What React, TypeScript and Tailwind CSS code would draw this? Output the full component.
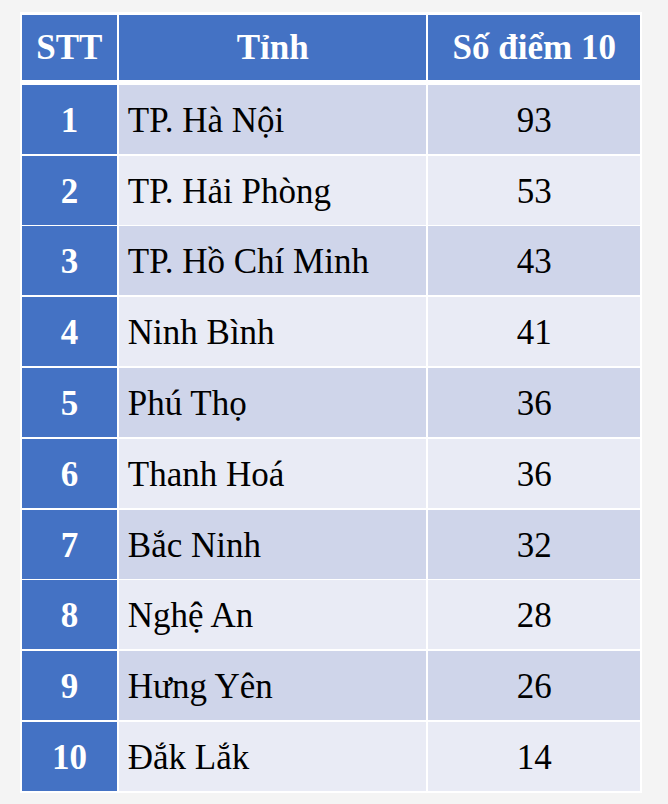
import React from 'react';

type Row = {
  stt: number;
  province: string;
  score: number;
};

const rows: Row[] = [
  { stt: 1, province: 'TP. Hà Nội', score: 93 },
  { stt: 2, province: 'TP. Hải Phòng', score: 53 },
  { stt: 3, province: 'TP. Hồ Chí Minh', score: 43 },
  { stt: 4, province: 'Ninh Bình', score: 41 },
  { stt: 5, province: 'Phú Thọ', score: 36 },
  { stt: 6, province: 'Thanh Hoá', score: 36 },
  { stt: 7, province: 'Bắc Ninh', score: 32 },
  { stt: 8, province: 'Nghệ An', score: 28 },
  { stt: 9, province: 'Hưng Yên', score: 26 },
  { stt: 10, province: 'Đắk Lắk', score: 14 },
];

export default function App() {
  return (
    <div className="min-h-screen bg-[#f4f4f4] pl-[20px] pt-[11.5px] font-[family-name:'Liberation_Serif','Times_New_Roman',serif] text-[35px] leading-none">
      <div className="flex w-[622px] flex-col gap-[1.8px] bg-white p-[1.6px]">
        <div className="mb-[3px] grid h-[67px] grid-cols-[95.6px_307.7px_212.4px] gap-[1.6px] pt-[2px] font-bold text-white">
          <div className="flex items-center justify-center bg-[#4472c4]">STT</div>
          <div className="flex items-center justify-center bg-[#4472c4]">Tỉnh</div>
          <div className="flex items-center justify-center bg-[#4472c4]">Số điểm 10</div>
        </div>
        {rows.map((row, index) => (
          <div
            key={row.stt}
            className="grid h-[69px] grid-cols-[95.6px_307.7px_212.4px] gap-[1.6px]"
          >
            <div className="flex items-center justify-center bg-[#4472c4] pt-[2px] font-bold text-white">
              {row.stt}
            </div>
            <div
              className={`flex items-center pl-[9px] pt-[2px] text-black ${
                index % 2 === 0 ? 'bg-[#cfd5ea]' : 'bg-[#e9ebf5]'
              }`}
            >
              {row.province}
            </div>
            <div
              className={`flex items-center justify-center pt-[2px] text-black ${
                index % 2 === 0 ? 'bg-[#cfd5ea]' : 'bg-[#e9ebf5]'
              }`}
            >
              {row.score}
            </div>
          </div>
        ))}
      </div>
    </div>
  );
}
